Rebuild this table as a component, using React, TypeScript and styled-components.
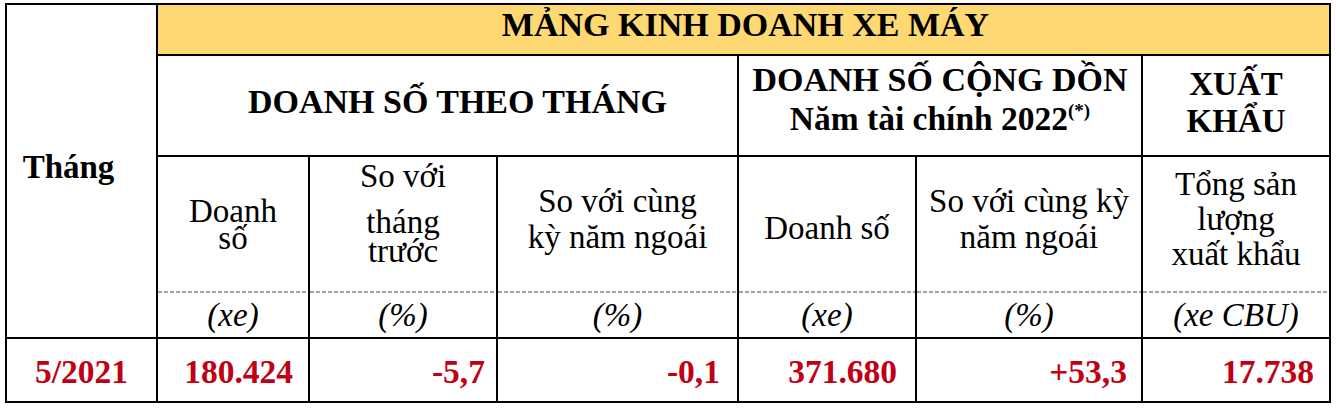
import React from "react";
import styled, { createGlobalStyle, css } from "styled-components";

const GlobalStyle = createGlobalStyle`
  html, body {
    margin: 0;
    padding: 0;
    background: #ffffff;
  }
  body {
    font-family: "Liberation Serif", "Times New Roman", serif;
    color: #000000;
  }
`;

const Page = styled.div`
  padding: 3px 0 0 5px;
`;

const Grid = styled.div`
  display: grid;
  grid-template-columns: 151px 152px 188px 241px 178px 226px 188px;
  grid-template-rows: 51px 101px 136px 46px 64px;
  width: 1326px;
  box-sizing: border-box;
  border-top: 2px solid #000;
  border-left: 2px solid #000;
  font-size: 33px;
`;

type CellProps = {
  $col: string;
  $row: string;
  $pt?: number;
  $pl?: number;
  $pr?: number;
  $lh?: number;
  $fs?: number;
};

const cellBase = css<CellProps>`
  grid-column: ${(p) => p.$col};
  grid-row: ${(p) => p.$row};
  box-sizing: border-box;
  border-right: 2px solid #000;
  border-bottom: 2px solid #000;
  display: flex;
  flex-direction: column;
  align-items: center;
  justify-content: flex-start;
  padding: ${(p) => p.$pt ?? 0}px ${(p) => p.$pr ?? 0}px 0
    ${(p) => p.$pl ?? 0}px;
  line-height: ${(p) => p.$lh ?? 32}px;
  text-align: center;
  white-space: nowrap;
`;

const TitleCell = styled.div<CellProps>`
  ${cellBase};
  background: #fed872;
  font-size: 34px;
  font-weight: bold;
`;

const HeadCell = styled.div<CellProps>`
  ${cellBase};
  font-size: ${(p) => p.$fs ?? 34}px;
  font-weight: bold;
`;

const LabelCell = styled.div<CellProps>`
  ${cellBase};
  border-bottom: none;
  background-image: linear-gradient(to right, #a3a3a3 60%, transparent 60%);
  background-size: 6px 2px;
  background-repeat: repeat-x;
  background-position: left bottom;
`;

const UnitCell = styled.div<CellProps>`
  ${cellBase};
  justify-content: center;
  font-style: italic;
`;

const DataCell = styled.div<CellProps & { $right?: boolean }>`
  ${cellBase};
  align-items: ${(p) => (p.$right ? "flex-end" : "center")};
  color: #c00014;
  font-size: 33.5px;
  font-weight: bold;
`;

const Line = styled.span<{ $gap?: number; $fs?: number }>`
  display: block;
  margin-bottom: ${(p) => p.$gap ?? 0}px;
  ${(p) => (p.$fs ? `font-size: ${p.$fs}px;` : "")}
`;

const Sup = styled.sup`
  font-size: 19px;
  line-height: 0;
  vertical-align: 13px;
`;

const units = [
  { col: "2", text: "(xe)" },
  { col: "3", text: "(%)" },
  { col: "4", text: "(%)" },
  { col: "5", text: "(xe)" },
  { col: "6", text: "(%)" },
  { col: "7", text: "(xe CBU)" },
];

const values = [
  { col: "2", text: "180.424", pr: 15 },
  { col: "3", text: "-5,7", pr: 11 },
  { col: "4", text: "-0,1", pr: 17 },
  { col: "5", text: "371.680", pr: 18 },
  { col: "6", text: "+53,3", pr: 14 },
  { col: "7", text: "17.738", pr: 15 },
];

export default function App() {
  return (
    <>
      <GlobalStyle />
      <Page>
        <Grid>
          <HeadCell $col="1" $row="1 / 5" $pt={146} $pr={26} $fs={33}>
            Tháng
          </HeadCell>
          <TitleCell $col="2 / 8" $row="1" $pt={4} $pl={4}>
            MẢNG KINH DOANH XE MÁY
          </TitleCell>

          <HeadCell $col="2 / 5" $row="2" $pt={30} $pl={20}>
            DOANH SỐ THEO THÁNG
          </HeadCell>
          <HeadCell $col="5 / 7" $row="2" $pt={4} $lh={39}>
            <Line>DOANH SỐ CỘNG DỒN</Line>
            <Line $fs={33.5}>
              Năm tài chính 2022<Sup>(*)</Sup>
            </Line>
          </HeadCell>
          <HeadCell $col="7" $row="2" $pt={10} $lh={37} $fs={33}>
            <Line>XUẤT</Line>
            <Line>KHẨU</Line>
          </HeadCell>

          <LabelCell $col="2" $row="3" $pt={41} $lh={27}>
            <Line>Doanh</Line>
            <Line>số</Line>
          </LabelCell>
          <LabelCell $col="3" $row="3" $pt={5} $lh={29}>
            <Line $gap={17}>So với</Line>
            <Line>tháng</Line>
            <Line>trước</Line>
          </LabelCell>
          <LabelCell $col="4" $row="3" $pt={26} $lh={36}>
            <Line>So với cùng</Line>
            <Line>kỳ năm ngoái</Line>
          </LabelCell>
          <LabelCell $col="5" $row="3" $pt={55}>
            Doanh số
          </LabelCell>
          <LabelCell $col="6" $row="3" $pt={26} $lh={36}>
            <Line>So với cùng kỳ</Line>
            <Line>năm ngoái</Line>
          </LabelCell>
          <LabelCell $col="7" $row="3" $pt={10} $lh={35}>
            <Line>Tổng sản</Line>
            <Line>lượng</Line>
            <Line>xuất khẩu</Line>
          </LabelCell>

          {units.map((u) => (
            <UnitCell key={u.col} $col={u.col} $row="4">
              {u.text}
            </UnitCell>
          ))}

          <DataCell $col="1" $row="5" $pt={17}>
            5/2021
          </DataCell>
          {values.map((v) => (
            <DataCell
              key={v.col}
              $col={v.col}
              $row="5"
              $pt={17}
              $pr={v.pr}
              $right>
              {v.text}
            </DataCell>
          ))}
        </Grid>
      </Page>
    </>
  );
}
